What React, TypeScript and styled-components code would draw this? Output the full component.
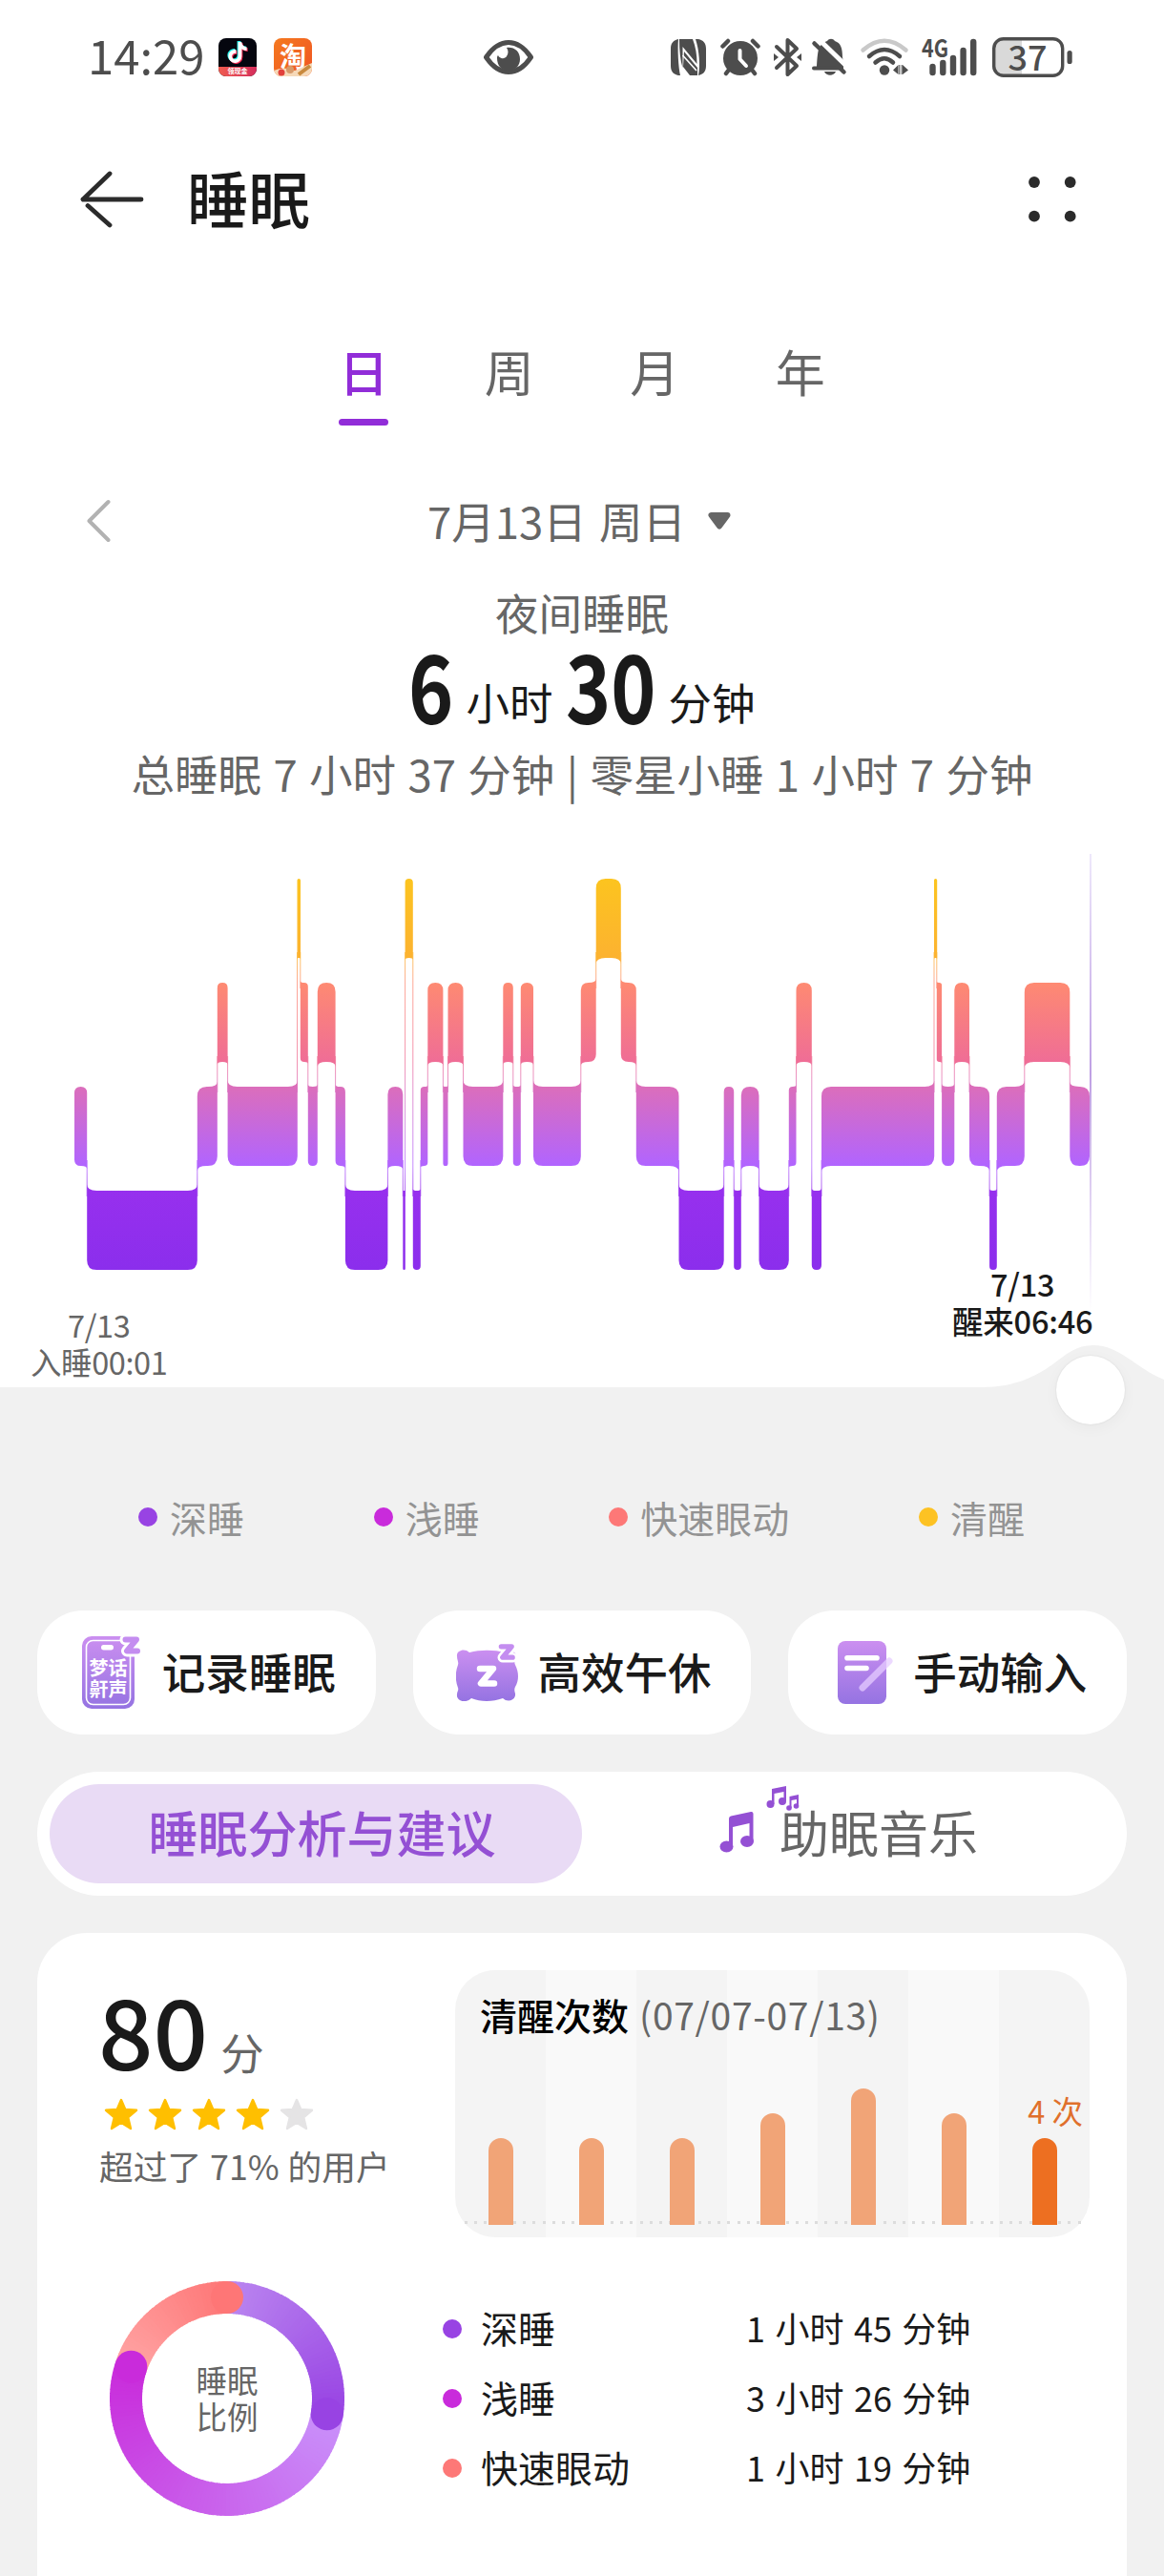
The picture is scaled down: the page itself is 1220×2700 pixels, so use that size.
import React from "react";
import styled, { createGlobalStyle } from "styled-components";
import { FaTiktok } from "react-icons/fa";

const FONT = `"Noto Sans CJK SC", "Noto Sans", sans-serif`;

const Global = createGlobalStyle`
  * { box-sizing: border-box; }
  html, body { margin: 0; padding: 0; background: #f1f1f1; }
  body { font-family: ${FONT}; color: #1a1a1a; }
`;

/* ---------- page frame ---------- */

const Page = styled.main`
  width: 1220px;
  height: 2700px;
  overflow: hidden;
  display: flex;
  flex-direction: column;
  background: #f1f1f1;
`;

const TopPane = styled.section`
  display: flex;
  flex-direction: column;
  background: #fff;
`;

/* ---------- status bar ---------- */

const StatusBar = styled.div`
  display: flex;
  align-items: center;
  height: 120px;
  padding: 0 96px 0 92px;
`;

const StatusLeft = styled.div`
  display: flex;
  align-items: center;
  width: 415px;
`;

const Clock = styled.span`
  width: 137px;
  font-size: 49px;
  line-height: 60px;
  margin-top: -7px;
  color: #4d4d4d;
  white-space: nowrap;
`;

const AppBadge = styled.span<{ $bg: string }>`
  position: relative;
  display: block;
  width: 40px;
  height: 40px;
  margin-right: 18px;
  border-radius: 8px;
  background: ${(p) => p.$bg};
`;

const NoteLayer = styled.span<{ $x: number; $y: number; $color: string }>`
  position: absolute;
  left: ${(p) => 9 + p.$x}px;
  top: ${(p) => 4 + p.$y}px;
  font-size: 22px;
  line-height: 0;
  color: ${(p) => p.$color};
`;

const BadgeRibbon = styled.span`
  position: absolute;
  left: 0;
  right: 0;
  bottom: 0;
  height: 10px;
  border-radius: 0 0 8px 8px;
  background: linear-gradient(90deg, #ef5c50, #d52d5c);
  color: #fff;
  font-size: 7px;
  line-height: 9px;
  font-weight: 700;
  text-align: center;
`;

const BadgeGlyph = styled.span`
  position: absolute;
  left: 6px;
  top: 3px;
  font-size: 28px;
  line-height: 30px;
  font-weight: 700;
  color: #fff;
`;

const BadgeFoot = styled.svg`
  position: absolute;
  left: 0;
  bottom: 0;
  border-radius: 0 0 8px 8px;
`;

const StatusRight = styled.div`
  display: flex;
  align-items: center;
  margin-left: auto;
`;

const StatusIcon = styled.svg<{ $gap?: number }>`
  display: block;
  overflow: visible;
  margin-left: ${(p) => p.$gap ?? 0}px;
`;

/* ---------- header ---------- */

const Header = styled.header`
  display: flex;
  align-items: center;
  height: 178px;
  padding: 0 92px 0 84px;
`;

const Title = styled.h1`
  flex: 1;
  margin: -6px 0 0 44px;
  font-size: 64.5px;
  line-height: 80px;
  font-weight: 500;
`;

const Tabs = styled.nav`
  display: flex;
  justify-content: center;
  gap: 100.5px;
  height: 148px;
  padding-top: 61px;
`;

const Tab = styled.span<{ $active?: boolean }>`
  display: flex;
  flex-direction: column;
  gap: 20px;
  width: 52px;
  font-size: 52px;
  line-height: 60px;
  font-weight: ${(p) => (p.$active ? 500 : 400)};
  color: ${(p) => (p.$active ? "#912dd8" : "#666")};
  &::after {
    content: "";
    height: 7px;
    border-radius: 4px;
    background: ${(p) => (p.$active ? "#912dd8" : "transparent")};
  }
`;

const DateRow = styled.div`
  display: flex;
  align-items: center;
  height: 80px;
  margin-top: 60px;
  padding-left: 90px;
`;

const DateText = styled.span`
  margin: -2px 23px 0 332px;
  font-size: 45.5px;
  line-height: 60px;
  color: #666;
  white-space: nowrap;
  word-spacing: 3px;
`;

const NightLabel = styled.div`
  margin-top: 25px;
  height: 58px;
  font-size: 45.5px;
  line-height: 60px;
  text-align: center;
  color: #666;
`;

const Duration = styled.div`
  display: flex;
  justify-content: center;
  align-items: baseline;
  height: 112px;
  line-height: 94px;
  color: #1a1a1a;
`;

const BigNumber = styled.span<{ $w: number }>`
  display: inline-block;
  width: ${(p) => p.$w}px;
  font-size: 99px;
  font-weight: 700;
  transform: scaleX(0.81);
  transform-origin: 0 50%;
  white-space: nowrap;
`;

const Unit = styled.span<{ $after?: number }>`
  position: relative;
  top: -4px;
  font-size: 45.5px;
  margin: 0 ${(p) => p.$after ?? 0}px 0 14px;
`;

const TotalLine = styled.div`
  height: 60px;
  font-size: 45.5px;
  line-height: 58px;
  text-align: center;
  color: #666;
  word-spacing: 2.2px;
  white-space: nowrap;
`;

const Divider = styled.span`
  display: inline-block;
  width: 37px;
`;

/* ---------- hypnogram ---------- */

const ChartArea = styled.div`
  position: relative;
  height: 659px;
`;

const ChartSvg = styled.svg`
  display: block;
`;

const TimeLabel = styled.div<{ $x: number; $y: number; $strong?: boolean }>`
  position: absolute;
  left: ${(p) => p.$x}px;
  top: ${(p) => p.$y}px;
  display: flex;
  flex-direction: column;
  align-items: center;
  font-size: 32.5px;
  line-height: 39px;
  letter-spacing: ${(p) => (p.$strong ? -0.2 : -0.4)}px;
  font-weight: ${(p) => (p.$strong ? 500 : 400)};
  color: ${(p) => (p.$strong ? "#1a1a1a" : "#666")};
  white-space: nowrap;
`;

const Knob = styled.div`
  position: absolute;
  left: 1107px;
  top: 580px;
  width: 72px;
  height: 72px;
  border-radius: 50%;
  background: #fff;
  box-shadow: 0 4px 16px rgba(0, 0, 0, 0.04), 0 0 2px rgba(0, 0, 0, 0.1);
`;

/* ---------- legend ---------- */

const Legend = styled.div`
  display: flex;
  justify-content: space-between;
  align-items: center;
  height: 60px;
  margin-top: 60px;
  padding: 0 146px 0 145px;
`;

const LegendItem = styled.span`
  display: flex;
  align-items: center;
  gap: 13px;
  font-size: 39px;
  line-height: 56px;
  color: #939393;
`;

const Dot = styled.i<{ $color: string }>`
  display: block;
  width: 20px;
  height: 20px;
  border-radius: 50%;
  background: ${(p) => p.$color};
`;

/* ---------- actions ---------- */

const Actions = styled.div`
  display: grid;
  grid-template-columns: repeat(3, 1fr);
  gap: 39px;
  margin: 68px 39px 0;
`;

const ActionCard = styled.button`
  display: flex;
  align-items: center;
  justify-content: center;
  gap: 20px;
  height: 130px;
  padding: 0 0 0 4px;
  border: 0;
  border-radius: 48px;
  background: #fff;
  font: 500 45.5px/60px ${FONT};
  color: #1a1a1a;
  white-space: nowrap;
`;

const ActionLabel = styled.span`
  margin-top: -4px;
`;

/* ---------- segmented control ---------- */

const Segmented = styled.div`
  display: grid;
  grid-template-columns: 1fr 1fr;
  height: 130px;
  margin: 39px 39px 0;
  padding: 13px;
  border-radius: 65px;
  background: #fff;
`;

const Segment = styled.div<{ $active?: boolean }>`
  position: relative;
  display: flex;
  align-items: center;
  justify-content: center;
  border-radius: 52px;
  padding: 0 0 4px ${(p) => (p.$active ? 13 : 64)}px;
  font-size: 52px;
  line-height: 70px;
  font-weight: ${(p) => (p.$active ? 500 : 400)};
  color: ${(p) => (p.$active ? "#9450d4" : "#666")};
  background: ${(p) => (p.$active ? "#e9dbf5" : "transparent")};
`;

const MusicIcon = styled.svg`
  position: absolute;
  left: 144px;
  top: 0;
`;

/* ---------- report card ---------- */

const Report = styled.section`
  display: flex;
  flex-direction: column;
  flex: 1;
  margin: 39px 39px 0;
  padding: 39px 39px 0;
  border-radius: 52px 52px 0 0;
  background: #fff;
`;

const ReportTop = styled.div`
  display: flex;
  height: 280px;
`;

const Score = styled.div`
  width: 399px;
  padding: 11px 0 0 25px;
`;

const ScoreLine = styled.div`
  display: flex;
  align-items: baseline;
  height: 100px;
  line-height: 100px;
`;

const ScoreValue = styled.span`
  font-size: 101px;
  font-weight: 500;
`;

const ScoreUnit = styled.span`
  margin-left: 13px;
  font-size: 45.5px;
  color: #666;
`;

const Stars = styled.div`
  display: flex;
  gap: 10px;
  margin: 23px 0 0 6px;
`;

const ScoreNote = styled.div`
  margin: 15px 0 0 1px;
  font-size: 35.75px;
  line-height: 44px;
  word-spacing: 0.8px;
  color: #666;
  white-space: nowrap;
`;

const WakePanel = styled.div`
  display: flex;
  flex-direction: column;
  width: 665px;
  height: 280px;
  border-radius: 42px;
  background: repeating-linear-gradient(90deg, #f4f4f4 0 95px, #f9f9f9 95px 190px);
`;

const WakeTitle = styled.div`
  height: 71px;
  padding: 21px 0 0 26px;
  font-size: 39px;
  line-height: 50px;
  font-weight: 500;
  color: #000;
  white-space: nowrap;
`;

const WakeRange = styled.span`
  margin-left: 11px;
  font-weight: 400;
  letter-spacing: 0.7px;
  color: #666;
`;

const WakeBars = styled.div`
  position: relative;
  display: grid;
  grid-template-columns: repeat(7, 95px);
  align-items: end;
  height: 196px;
  &::before {
    content: "";
    position: absolute;
    left: 10px;
    right: 6px;
    bottom: 1px;
    height: 3px;
    background: repeating-linear-gradient(90deg, #dcdcdc 0 3px, transparent 3px 10.2px);
  }
`;

const WakeColumn = styled.div`
  position: relative;
  display: flex;
  flex-direction: column;
  align-items: center;
`;

const WakeBar = styled.i<{ $current?: boolean }>`
  width: 26px;
  border-radius: 13px 13px 0 0;
  background: ${(p) => (p.$current ? "#ed6f21" : "#f1a477")};
`;

const WakeCount = styled.span`
  align-self: flex-end;
  margin: 0 7px 9px 0;
  font-size: 32.5px;
  line-height: 40px;
  color: #e0702c;
`;

const ReportBottom = styled.div`
  display: flex;
  align-items: center;
  margin: 46px 0 0 37px;
`;

const DonutBox = styled.div`
  position: relative;
  width: 246px;
  height: 246px;
`;

const DonutLabel = styled.div`
  position: absolute;
  inset: 0;
  display: flex;
  flex-direction: column;
  align-items: center;
  justify-content: center;
  padding-bottom: 3px;
  font-size: 32.5px;
  line-height: 38px;
  color: #666;
`;

const StageList = styled.div`
  margin-left: 103px;
  display: flex;
  flex-direction: column;
`;

const StageRow = styled.div`
  display: flex;
  align-items: center;
  height: 73px;
  font-size: 39px;
  color: #1a1a1a;
`;

const StageName = styled.span`
  width: 278px;
  margin: -4px 0 0 20px;
`;

const StageTime = styled.span`
  margin-top: -4px;
  font-size: 36px;
  word-spacing: 2.4px;
`;

/* ---------- data ---------- */

const A = 0;
const R = 1;
const L = 2;
const D = 3;

const SEGMENTS: [number, number, number][] = [
  [L, 78, 91.2], [D, 91.2, 206.8], [L, 206.8, 227.8], [R, 227.8, 238.6], [L, 238.6, 311.8],
  [A, 311.5, 315], [R, 314.8, 322.8], [L, 322.8, 332.8], [R, 332.8, 351.6], [L, 351.6, 361.9],
  [D, 361.9, 406.4], [L, 406.4, 422.3], [D, 422.3, 424.8], [A, 424.6, 432.8], [D, 432.8, 440.8],
  [L, 440.8, 448.3], [R, 448.3, 464.4], [L, 464.4, 469.5], [R, 469.5, 485.5], [L, 485.5, 527.3],
  [R, 527.3, 537.8], [L, 537.8, 545.8], [R, 545.8, 559], [L, 559, 608.8], [R, 608.8, 624.7],
  [A, 624.7, 650.8], [R, 650.8, 666.8], [L, 666.8, 711.5], [D, 711.5, 758.7], [L, 758.7, 769.2],
  [D, 769.2, 776.8], [L, 776.8, 795.5], [D, 795.5, 826.8], [L, 826.8, 834.5], [R, 834.5, 850.8],
  [D, 850.8, 861], [L, 861, 979.2], [A, 979, 982.2], [R, 981.8, 987.1], [L, 987.1, 1000.3],
  [R, 1000.3, 1016], [L, 1016, 1037.1], [D, 1037.1, 1044.8], [L, 1044.8, 1073.8],
  [R, 1073.8, 1121.3], [L, 1121.3, 1142],
];

const TOP = [921, 1030, 1139, 1248];
const BAND = 83;

/* Corners next to a change of stage flare towards it; all others are rounded. */
function segmentPath(i: number) {
  const [stage, x0, x1] = SEGMENTS[i];
  const t = TOP[stage];
  const b = t + BAND;
  const w = x1 - x0;
  const r = Math.min(10, w / 2);
  const f = Math.min(6.5, w / 4);
  const prev = i > 0 ? SEGMENTS[i - 1][0] : null;
  const next = i < SEGMENTS.length - 1 ? SEGMENTS[i + 1][0] : null;
  const tl = prev !== null && prev < stage;
  const bl = prev !== null && prev > stage;
  const tr = next !== null && next < stage;
  const br = next !== null && next > stage;
  return [
    `M ${x0} ${tl ? t - f : t + r}`,
    `Q ${x0} ${t} ${x0 + r} ${t}`,
    `L ${x1 - r} ${t}`,
    `Q ${x1} ${t} ${x1} ${tr ? t - f : t + r}`,
    `L ${x1} ${br ? b + f : b - r}`,
    `Q ${x1} ${b} ${x1 - r} ${b}`,
    `L ${x0 + r} ${b}`,
    `Q ${x0} ${b} ${x0} ${bl ? b + f : b - r}`,
    "Z",
  ].join(" ");
}

const WAKES = [91, 91, 91, 117, 143, 117, 91];

const STAGES = [
  { name: "深睡", color: "#9843e3", time: "1 小时 45 分钟" },
  { name: "浅睡", color: "#c92bdb", time: "3 小时 26 分钟" },
  { name: "快速眼动", color: "#fd7877", time: "1 小时 19 分钟" },
];

/* ---------- drawings ---------- */

function Hypnogram() {
  return (
    <ChartSvg width="1220" height="659" viewBox="0 841 1220 659">
      <defs>
        <linearGradient id="stage" gradientUnits="userSpaceOnUse" x1="0" y1="921" x2="0" y2="1331">
          <stop offset="0" stopColor="#fcc41f" />
          <stop offset="0.2024" stopColor="#fcb230" />
          <stop offset="0.266" stopColor="#fe8a72" />
          <stop offset="0.468" stopColor="#ef6d96" />
          <stop offset="0.532" stopColor="#db6ebb" />
          <stop offset="0.734" stopColor="#b164ff" />
          <stop offset="0.79" stopColor="#9730ee" />
          <stop offset="1" stopColor="#8b2eec" />
        </linearGradient>
        <linearGradient id="cursor" x1="0" y1="0" x2="0" y2="1">
          <stop offset="0" stopColor="#eee8fb" />
          <stop offset="0.48" stopColor="#bfa0e4" />
          <stop offset="1" stopColor="#bfa0e4" stopOpacity="0" />
        </linearGradient>
      </defs>
      {SEGMENTS.map((_, i) => (
        <path key={i} d={segmentPath(i)} fill="url(#stage)" />
      ))}
      {SEGMENTS.slice(1).map(([stage, x], i) => {
        const prev = SEGMENTS[i][0];
        const y0 = TOP[Math.min(prev, stage)] + BAND - 6;
        const y1 = TOP[Math.max(prev, stage)] + 6;
        return (
          <rect key={i} x={x - 0.5} y={y0} width="1" height={y1 - y0} fill="url(#stage)" opacity="0.75" />
        );
      })}
      <rect x="1142" y="895" width="2" height="480" fill="url(#cursor)" />
      <path
        d="M0 1454 H1030 C1064 1454 1086 1442 1102 1431 C1118 1419 1128 1410 1146 1410 C1174 1410 1190 1434 1220 1446 V1500 H0 Z"
        fill="#f1f1f1"
      />
    </ChartSvg>
  );
}

const CX = 123;
const RING = 106;

function polar(deg: number) {
  const a = ((deg - 90) * Math.PI) / 180;
  return [CX + RING * Math.cos(a), CX + RING * Math.sin(a)];
}

function mix(from: number[], to: number[], t: number) {
  return `rgb(${from.map((v, i) => Math.round(v + (to[i] - v) * t)).join(",")})`;
}

function Arc({ from, to, start, end }: { from: number; to: number; start: number[]; end: number[] }) {
  const n = Math.ceil((to - from) / 2);
  const step = (to - from) / n;
  const [ex, ey] = polar(to);
  return (
    <g>
      {Array.from({ length: n }, (_, i) => {
        const a = from + i * step;
        const [x0, y0] = polar(a);
        const [x1, y1] = polar(Math.min(to, a + step + 0.5));
        return (
          <path
            key={i}
            d={`M${x0} ${y0} A${RING} ${RING} 0 0 1 ${x1} ${y1}`}
            stroke={mix(start, end, (i + 0.5) / n)}
            strokeWidth="34"
            fill="none"
          />
        );
      })}
      <circle cx={ex} cy={ey} r="17" fill={mix(start, end, 1)} />
    </g>
  );
}

function Donut() {
  return (
    <svg width="246" height="246" viewBox="0 0 246 246">
      <Arc from={288.3} to={360} start={[255, 164, 164]} end={[254, 118, 118]} />
      <Arc from={98.8} to={288.3} start={[201, 145, 250]} end={[201, 43, 219]} />
      <Arc from={0} to={98.8} start={[186, 134, 240]} end={[152, 67, 227]} />
      <path d="M123 0 A17 17 0 0 1 123 34 Z" fill="rgb(254,118,118)" />
    </svg>
  );
}

const INK = "#4d4d4d";

function StatusIcons() {
  return (
    <StatusRight>
      <StatusIcon width="37" height="38" viewBox="0 0 37 38">
        <path d="M8 0 C3 1 0 4 0 10 V28 C0 34 3 37 8 38 H10 C8 30 7 10 8 0 Z" fill={INK} />
        <path d="M29 0 C34 1 37 4 37 10 V28 C37 34 34 37 29 38 C31 28 30 12 26 0 Z" fill={INK} />
        <path d="M9 0 H23 C26 8 27.500 16 27.500 26 L12.500 8 V30 C10 22 9 12 9 0 Z" fill={INK} />
        <path d="M14 13 L28 30 V38 H20 L13 29 Z" fill={INK} />
        <path d="M12.500 17 L27 33" stroke="#fff" strokeWidth="1.600" />
      </StatusIcon>
      <StatusIcon $gap={15} width="42" height="40" viewBox="0 0 42 40">
        <g stroke={INK} strokeWidth="4.5" strokeLinecap="round">
          <path d="M2.5 8.5 L8 3 M39.500 8.500 L34 3 M9 33 L6 37 M33 33 L36 37" />
        </g>
        <circle cx="21" cy="21" r="18" fill={INK} />
        <path d="M20.500 13 V22 L27 29" fill="none" stroke="#fff" strokeWidth="4" strokeLinecap="round" strokeLinejoin="round" />
      </StatusIcon>
      <StatusIcon $gap={14} width="29" height="40" viewBox="0 0 29 40">
        <path d="M3 9 L24 29 L14.500 38 V2 L24 11 L3 31" fill="none" stroke={INK} strokeWidth="4" strokeLinecap="round" strokeLinejoin="round" />
        <path d="M0 16 L5 20 L0 24 Z M29 16 L24 20 L29 24 Z" fill={INK} />
      </StatusIcon>
      <StatusIcon $gap={11} width="36" height="40" viewBox="0 0 36 40">
        <path d="M5 32 C5 26 6 14 7 12 C9 6 13 4 16 3 C18 0 22 0 24 3 C30 5 32 10 32 20 L33 26 L33 33 H5 Z" fill={INK} />
        <path d="M2 31.500 H28" stroke={INK} strokeWidth="4" strokeLinecap="round" />
        <path d="M13 35 H25 C23 40 15 40 13 35 Z" fill={INK} />
        <path d="M6 0 L36 29" stroke="#fff" strokeWidth="5" />
        <path d="M2.500 5.500 L33.500 35.500" stroke={INK} strokeWidth="4.500" strokeLinecap="round" />
      </StatusIcon>
      <StatusIcon $gap={15} width="50" height="40" viewBox="0 0 50 40">
        <g fill="none" strokeWidth="4.500" strokeLinecap="round">
          <path d="M2.500 12.500 Q25 -7 47.500 12.500" stroke="#c9c9c9" />
          <path d="M9 19 Q25 5 41 19" stroke={INK} />
          <path d="M15.500 25.500 Q25 17 34 25.500" stroke={INK} />
        </g>
        <circle cx="25" cy="33.500" r="5.200" fill={INK} />
        <path d="M39.500 28 V38 L34 33.500 Z M44 28 L50 33.500 L44 38 Z" fill={INK} />
        <path d="M40.800 28 V38 M43.200 28 V38" stroke={INK} strokeWidth="1" />
      </StatusIcon>
      <StatusIcon $gap={14} width="60" height="40" viewBox="0 0 60 40">
        <text x="0" y="19.500" fontSize="26" fontWeight="700" fill={INK} textLength="28" lengthAdjust="spacingAndGlyphs" fontFamily={FONT}>4G</text>
        <g stroke={INK} strokeWidth="6.400" strokeLinecap="round">
          <path d="M11.500 30 V36 M22.300 26 V36 M33 21 V36 M43.600 13 V36 M54.200 4 V36" />
        </g>
      </StatusIcon>
      <StatusIcon $gap={14} width="84" height="42" viewBox="0 0 84 42">
        <path d="M12 2 H31 V40 H12 Q2 40 2 30 V12 Q2 2 12 2 Z" fill="#d9d9d9" />
        <rect x="1.700" y="1.700" width="72" height="38.600" rx="10" fill="none" stroke={INK} strokeWidth="3.400" />
        <rect x="78.500" y="14" width="5.200" height="14" rx="2.600" fill={INK} />
        <text x="37" y="34.500" fontSize="36" fontWeight="500" fill={INK} textAnchor="middle" fontFamily={FONT}>37</text>
      </StatusIcon>
    </StatusRight>
  );
}

function Star({ on }: { on: boolean }) {
  return (
    <svg width="36" height="34" viewBox="0 0 36 34">
      <path
        d="M18 2 L22.300 12 L34 12.800 L25.200 20.300 L28 32 L18 25.800 L8 32 L10.800 20.300 L2 12.800 L13.700 12 Z"
        fill={on ? "#ffbf00" : "#e5e4e5"}
        stroke={on ? "#ffbf00" : "#e5e4e5"}
        strokeWidth="2.400"
        strokeLinejoin="round"
      />
    </svg>
  );
}

function IconGradient({ id }: { id: string }) {
  return (
    <linearGradient id={id} x1="0" y1="0" x2="0" y2="1">
      <stop offset="0" stopColor="#cb8ff0" />
      <stop offset="1" stopColor="#9573e2" />
    </linearGradient>
  );
}

const Z_PATH = "M3.500 3.500 H15 L5 15.500 H16";

function SnoreIcon() {
  return (
    <svg width="65" height="78" viewBox="0 0 65 78">
      <defs><IconGradient id="snore" /></defs>
      <rect x="1" y="1" width="55" height="76" rx="10" fill="url(#snore)" />
      <rect x="5.500" y="5.500" width="46" height="67" rx="7" fill="none" stroke="#fff" strokeWidth="1.600" />
      <rect x="21" y="10" width="13" height="5.500" rx="2.700" fill="#fff" />
      <text x="28.500" y="42" fontSize="20" fontWeight="700" fill="#fff" textAnchor="middle" fontFamily={FONT}>梦话</text>
      <text x="28.500" y="64" fontSize="20" fontWeight="700" fill="#fff" textAnchor="middle" fontFamily={FONT}>鼾声</text>
      <g transform="translate(43 1)">
        <path d={Z_PATH} fill="none" stroke="#fff" strokeWidth="12" strokeLinejoin="round" strokeLinecap="round" />
        <path d={Z_PATH} fill="none" stroke="#c48df0" strokeWidth="6" strokeLinejoin="round" strokeLinecap="round" />
      </g>
    </svg>
  );
}

function PillowIcon() {
  return (
    <svg width="65" height="60" viewBox="0 0 65 60">
      <defs><IconGradient id="pillow" /></defs>
      <path
        d="M1 13 C0 7 9 4 14 9 C26 6 40 6 51 9 C57 5 65 9 63 15 C61 18 61 20 62 22 C66 30 66 38 62 45 C61 47 61 49 62 52 C63 59 54 62 49 57 C38 61 26 61 16 57 C10 63 0 60 1 53 C1 50 3 49 2 46 C-1 38 -1 30 2 22 C3 19 1 17 1 13 Z"
        fill="url(#pillow)"
      />
      <path d="M25 26 H39 L26 41.500 H40" fill="none" stroke="#fff" strokeWidth="6.500" strokeLinejoin="round" strokeLinecap="round" />
      <g transform="translate(44 -0.500) scale(0.95)">
        <path d={Z_PATH} fill="none" stroke="#fff" strokeWidth="11" strokeLinejoin="round" strokeLinecap="round" />
        <path d={Z_PATH} fill="none" stroke="#c48df0" strokeWidth="5.500" strokeLinejoin="round" strokeLinecap="round" />
      </g>
    </svg>
  );
}

function NoteIcon() {
  return (
    <svg width="65" height="66" viewBox="0 0 65 66">
      <defs><IconGradient id="note" /></defs>
      <rect x="6" y="0" width="51" height="66" rx="8" fill="url(#note)" />
      <path d="M16 17.700 H47 M16 28.500 H36" stroke="#fff" strokeWidth="5.600" strokeLinecap="round" />
      <path d="M32 49 L60 21" stroke="#e6ccff" strokeOpacity="0.75" strokeWidth="7" strokeLinecap="round" />
    </svg>
  );
}

export default function App() {
  return (
    <Page>
      <Global />
      <TopPane>
        <StatusBar>
          <StatusLeft>
            <Clock>14:29</Clock>
            <AppBadge $bg="#05060f">
              <NoteLayer $x={-1} $y={-1} $color="#25f4ee"><FaTiktok /></NoteLayer>
              <NoteLayer $x={1} $y={1} $color="#fe2c55"><FaTiktok /></NoteLayer>
              <NoteLayer $x={0} $y={0} $color="#fff"><FaTiktok /></NoteLayer>
              <BadgeRibbon>领现金</BadgeRibbon>
            </AppBadge>
            <AppBadge $bg="linear-gradient(135deg, #f5791f, #ef5423)">
              <BadgeGlyph>淘</BadgeGlyph>
              <BadgeFoot width="40" height="14" viewBox="0 0 40 14">
                <path d="M0 8 Q10 3 22 8 L40 0 V14 H0 Z" fill="#f6d9b8" />
                <circle cx="8" cy="10" r="3.500" fill="#e2413c" />
                <circle cx="17" cy="7" r="4" fill="#d79a6a" />
                <path d="M26 12 L38 3" stroke="#c98a3e" strokeWidth="4" />
              </BadgeFoot>
            </AppBadge>
          </StatusLeft>
          <StatusIcon width="52" height="36" viewBox="0 0 52 36">
            <path d="M2.500 18 Q13 2.500 26 2.500 Q39 2.500 49.500 18 Q39 33.500 26 33.500 Q13 33.500 2.500 18 Z" fill="none" stroke={INK} strokeWidth="5" strokeLinejoin="round" />
            <path d="M24 8 C32 7 38 12 38 20 C38 27 33 32 26 32 C19 32 14 27 14 19 C14 18 14 17 15 16 C17 20 22 20 24 17 C26 14 26 11 24 8 Z" fill={INK} />
          </StatusIcon>
          <StatusIcons />
        </StatusBar>

        <Header>
          <svg width="68" height="62" viewBox="0 0 68 62">
            <path d="M31 4 L3 31 M8 37.500 L31 58 M3 31 H64" fill="none" stroke="#2b2b2b" strokeWidth="4.800" strokeLinecap="round" />
          </svg>
          <Title>睡眠</Title>
          <svg width="50" height="48" viewBox="0 0 50 48">
            <g fill="#2b2b2b">
              <circle cx="6" cy="6" r="5.900" />
              <circle cx="43.700" cy="6" r="5.900" />
              <circle cx="6" cy="41.700" r="5.900" />
              <circle cx="43.700" cy="41.700" r="5.900" />
            </g>
          </svg>
        </Header>

        <Tabs>
          <Tab $active>日</Tab>
          <Tab>周</Tab>
          <Tab>月</Tab>
          <Tab>年</Tab>
        </Tabs>

        <DateRow>
          <svg width="26" height="46" viewBox="0 0 26 46">
            <path d="M23.500 3 L3.500 23 L23.500 43" fill="none" stroke="#b2b2b2" strokeWidth="4" strokeLinecap="round" strokeLinejoin="round" />
          </svg>
          <DateText>7月13日 周日</DateText>
          <svg width="24" height="18" viewBox="0 0 24 18">
            <path d="M3.500 3 H20.500 L12 14.500 Z" fill="#666" stroke="#666" strokeWidth="6" strokeLinejoin="round" />
          </svg>
        </DateRow>

        <NightLabel>夜间睡眠</NightLabel>
        <Duration>
          <BigNumber $w={46}>6</BigNumber>
          <Unit $after={13}>小时</Unit>
          <BigNumber $w={94}>30</BigNumber>
          <Unit>分钟</Unit>
        </Duration>
        <TotalLine>总睡眠 7 小时 37 分钟<Divider>|</Divider>零星小睡 1 小时 7 分钟</TotalLine>

        <ChartArea>
          <Hypnogram />
          <TimeLabel $x={32} $y={527}>
            <span>7/13</span>
            <span>入睡00:01</span>
          </TimeLabel>
          <TimeLabel $x={998} $y={484} $strong>
            <span>7/13</span>
            <span>醒来06:46</span>
          </TimeLabel>
          <Knob />
        </ChartArea>
      </TopPane>

      <Legend>
        {STAGES.map((s) => (
          <LegendItem key={s.name}><Dot $color={s.color} />{s.name}</LegendItem>
        ))}
        <LegendItem><Dot $color="#fdc223" />清醒</LegendItem>
      </Legend>

      <Actions>
        <ActionCard><SnoreIcon /><ActionLabel>记录睡眠</ActionLabel></ActionCard>
        <ActionCard><PillowIcon /><ActionLabel>高效午休</ActionLabel></ActionCard>
        <ActionCard><NoteIcon /><ActionLabel>手动输入</ActionLabel></ActionCard>
      </Actions>

      <Segmented>
        <Segment $active>睡眠分析与建议</Segment>
        <Segment>
          <MusicIcon width="84" height="78" viewBox="0 0 84 78">
            <g fill="#9450d4">
              <path d="M10 36 Q10 34 12 33.500 L33 29 Q35.500 28.700 35.500 31 V60 H31.500 V41 L14 45 V66 H10 Z" />
              <ellipse cx="7.500" cy="65.500" rx="7" ry="6" />
              <ellipse cx="29" cy="60" rx="7" ry="6" />
              <path d="M55 5 L70 2 V18 H67.500 V8 L57.500 10 V21 H55 Z" />
              <circle cx="53.500" cy="21" r="4" />
              <circle cx="66" cy="18" r="4" />
              <path d="M73.500 13 L83 11 V23 H81 V16 L75.500 17 V25 H73.500 Z" />
              <circle cx="73" cy="25" r="2.800" />
              <circle cx="80.500" cy="23" r="2.800" />
            </g>
          </MusicIcon>
          助眠音乐
        </Segment>
      </Segmented>

      <Report>
        <ReportTop>
          <Score>
            <ScoreLine>
              <ScoreValue>80</ScoreValue>
              <ScoreUnit>分</ScoreUnit>
            </ScoreLine>
            <Stars>
              {[1, 2, 3, 4, 5].map((n) => <Star key={n} on={n <= 4} />)}
            </Stars>
            <ScoreNote>超过了 71% 的用户</ScoreNote>
          </Score>
          <WakePanel>
            <WakeTitle>清醒次数<WakeRange>(07/07-07/13)</WakeRange></WakeTitle>
            <WakeBars>
              {WAKES.map((h, i) => {
                const current = i === WAKES.length - 1;
                return (
                  <WakeColumn key={i}>
                    {current && <WakeCount>4 次</WakeCount>}
                    <WakeBar $current={current} style={{ height: h }} />
                  </WakeColumn>
                );
              })}
            </WakeBars>
          </WakePanel>
        </ReportTop>
        <ReportBottom>
          <DonutBox>
            <Donut />
            <DonutLabel><span>睡眠</span><span>比例</span></DonutLabel>
          </DonutBox>
          <StageList>
            {STAGES.map((s) => (
              <StageRow key={s.name}>
                <Dot $color={s.color} />
                <StageName>{s.name}</StageName>
                <StageTime>{s.time}</StageTime>
              </StageRow>
            ))}
          </StageList>
        </ReportBottom>
      </Report>
    </Page>
  );
}
